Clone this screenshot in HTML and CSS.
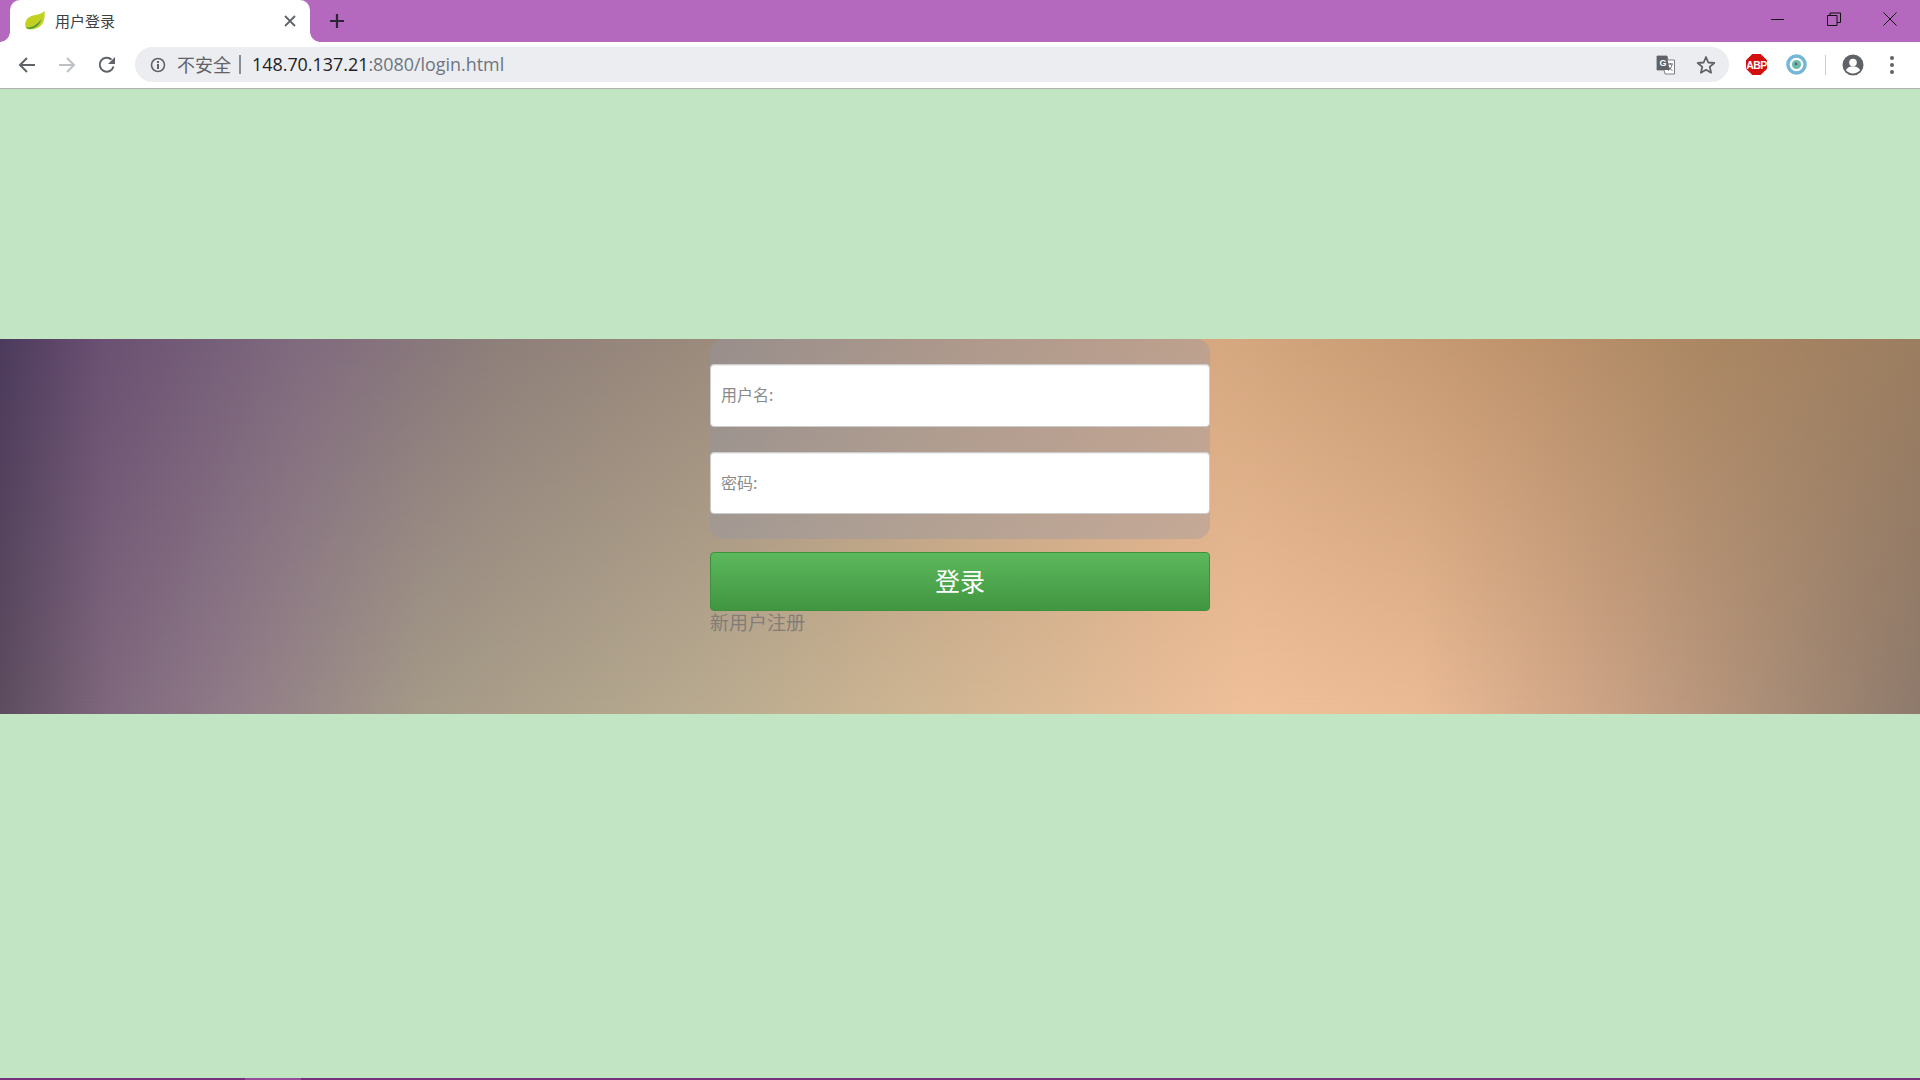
FILE: index.html
```html
<!DOCTYPE html>
<html lang="zh-CN">
<head>
<meta charset="utf-8">
<title>用户登录</title>
<link rel="stylesheet" href="styles.css">
</head>
<body>
<div class="browser">
  <header class="tabstrip">
    <div class="tab">
      <svg class="favicon" viewBox="0 0 20 19"><path d="M.5 16C-1 9 4 5 10 4c4-.6 7-1.500 9.500-4C20.500 8 18 15.500 11 17.500 6 19 2 19 .5 16z" fill="#c2d121"/><path d="M1 16.500c5 .5 11-2 15.500-8.500C15 13.500 11 16.500 7.500 17.500c-3 .8-5.500.5-6.500-1z" fill="#4d9a3a"/></svg>
      <span class="tab-title">用户登录</span>
      <svg class="tab-close" viewBox="0 0 12 12"><path d="M1 1l10 10M11 1L1 11" stroke="#5f6368" stroke-width="1.800" fill="none"/></svg>
    </div>
    <svg class="new-tab" viewBox="0 0 16 16"><path d="M8 1v14M1 8h14" stroke="#2d2438" stroke-width="2.200" fill="none"/></svg>
    <div class="win-controls">
      <svg class="win-btn" viewBox="0 0 14 14"><path d="M0 7.500h13" stroke="#111" stroke-width="1" fill="none"/></svg>
      <svg class="win-btn" viewBox="0 0 14 14"><path d="M.5 3.500h9.500v10H.5zM3 3.500V1h10.500v9.500H10" stroke="#111" stroke-width="1" fill="none"/></svg>
      <svg class="win-btn" viewBox="0 0 14 14"><path d="M.5.5l13 13M13.500.5l-13 13" stroke="#111" stroke-width="1" fill="none"/></svg>
    </div>
  </header>
  <nav class="toolbar">
    <svg class="nav-icon" viewBox="0 0 18 18"><path d="M17 9H2.500M9 2L2 9l7 7" stroke="#5f6368" stroke-width="2" fill="none"/></svg>
    <svg class="nav-icon" viewBox="0 0 18 18"><path d="M1 9h14.500M9 2l7 7-7 7" stroke="#bdc1c6" stroke-width="2" fill="none"/></svg>
    <svg class="nav-icon" viewBox="0 0 18 18"><path d="M15.500 10.500A7 7 0 1 1 13.500 3.500" stroke="#5f6368" stroke-width="2" fill="none"/><path d="M17 1v7h-7z" fill="#5f6368"/></svg>
    <div class="omnibox">
      <svg class="info" viewBox="0 0 16 16"><circle cx="8" cy="8" r="6.500" stroke="#5f6368" stroke-width="1.600" fill="none"/><path d="M7 7h2v5H7zM7 4h2v2H7z" fill="#5f6368"/></svg>
      <span class="insecure">不安全</span>
      <span class="sep"></span>
      <span class="url"><span class="host">148.70.137.21</span>:8080/login.html</span>
      <svg class="omni-icon" viewBox="0 0 20 20"><path d="M1 1h10l1 4h6.500v14H9l-1-4H1z" fill="#fff" stroke="#7a7e83" stroke-width="1"/><path d="M1 1h10l2.500 14H1z" fill="#5f6368"/><text x="3.500" y="11" class="g-mark">G</text><path d="M12 9h5M14.500 8v1.500M16 9.500c-.5 3-2 5-4 6M12.500 11.500c1 2 2.500 3.500 4 4" stroke="#5f6368" stroke-width="1" fill="none"/></svg>
      <svg class="omni-icon" viewBox="0 0 20 20"><path d="M10 2l2.300 5.500 6 .5-4.600 3.900 1.400 5.800L10 14.800l-5.100 2.900 1.400-5.800L1.700 8l6-.5z" stroke="#5f6368" stroke-width="1.800" fill="none" stroke-linejoin="round"/></svg>
    </div>
    <div class="extensions">
      <div class="abp">ABP</div>
      <svg class="ext-eye" viewBox="0 0 22 22"><circle cx="11" cy="11" r="9" fill="#fff" stroke="#74b6d8" stroke-width="3.600"/><circle cx="11" cy="11" r="4.800" fill="#6cbcae"/><circle cx="10.500" cy="10.500" r="1.500" fill="#5a6a70"/></svg>
      <span class="divider"></span>
      <svg class="avatar" viewBox="0 0 22 22"><circle cx="11" cy="11" r="10.500" fill="#5f6368"/><circle cx="11" cy="8.500" r="3.800" fill="#fff"/><path d="M3.800 16c2-3 4.500-3.800 7.200-3.800s5.200.8 7.200 3.800c-1.800 2.200-4.400 3.500-7.200 3.500s-5.400-1.300-7.200-3.500z" fill="#fff"/></svg>
      <svg class="menu" viewBox="0 0 6 20"><circle cx="3" cy="3" r="2" fill="#5f6368"/><circle cx="3" cy="10" r="2" fill="#5f6368"/><circle cx="3" cy="17" r="2" fill="#5f6368"/></svg>
    </div>
  </nav>
  <main class="page">
    <section class="band">
      <div class="login">
        <div class="fields">
          <input class="field" type="text" placeholder="用户名:">
          <input class="field field-short" type="password" placeholder="密码:">
        </div>
        <button class="submit" type="button">登录</button>
        <a class="register" href="#">新用户注册</a>
      </div>
    </section>
  </main>
  <footer class="desktop-edge"><span class="edge-active"></span></footer>
</div>
</body>
</html>
```

FILE: styles.css
```css
* { box-sizing: border-box; }
html, body { margin: 0; height: 100%; overflow: hidden; }
body { font-family: "Noto Sans CJK SC", "Noto Sans", sans-serif; background: #c2e6c4; }
.browser { display: flex; flex-direction: column; height: 1080px; }

.tabstrip { display: flex; align-items: flex-start; height: 42px; flex: none; background: #b469be; padding-left: 10px; }
.tab { position: relative; display: flex; align-items: center; width: 300px; height: 42px; background: #fff; border-radius: 10px 10px 0 0; padding: 0 14px 0 15px; }
.tab::before, .tab::after { content: ""; position: absolute; bottom: 0; width: 10px; height: 10px; }
.tab::before { left: -10px; background: radial-gradient(circle at 0 0, #b469be 9.500px, #fff 10px); }
.tab::after { right: -10px; background: radial-gradient(circle at 100% 0, #b469be 9.500px, #fff 10px); }
.favicon { width: 20px; height: 19px; flex: none; margin-top: -1px; }
.tab-title { flex: 1; margin: 0 0 2px 10px; font-size: 15px; color: #3c4043; }
.tab-close { width: 12px; height: 12px; flex: none; }
.new-tab { width: 16px; height: 16px; margin: 13px 0 0 19px; }
.win-controls { display: flex; margin-left: auto; gap: 42px; padding: 12px 23px 0 0; }
.win-btn { width: 14px; height: 14px; }

.toolbar { display: flex; align-items: center; height: 47px; flex: none; background: #fff; border-bottom: 1px solid #b3b0b4; padding: 0 0 1px 18px; }
.nav-icon { width: 18px; height: 18px; flex: none; margin-right: 22px; }
.nav-icon:nth-of-type(2) { margin-right: 23px; }
.nav-icon:nth-of-type(3) { margin-right: 19px; margin-left: -1px; }
.omnibox { display: flex; align-items: center; width: 1594px; height: 35px; background: #ebedf0; border-radius: 18px; padding: 0 13px 0 15px; }
.info { width: 16px; height: 16px; flex: none; }
.insecure { margin: 0 0 2px 11px; font-size: 18px; color: #5f6368; }
.sep { width: 2px; height: 19px; margin: 0 11px 0 8px; background: #8a8d91; }
.url { flex: 1; margin-bottom: 2px; font-family: "Open Sans", "Noto Sans", sans-serif; font-size: 17.900px; color: #6d7580; }
.host { color: #202124; }
.omni-icon { width: 20px; height: 20px; flex: none; margin-left: 20px; }
.g-mark { font-family: "Liberation Sans", sans-serif; font-size: 9px; font-weight: 700; fill: #fff; }
.extensions { display: flex; align-items: center; margin-left: 17px; }
.abp { display: flex; align-items: center; justify-content: center; width: 21px; height: 21px; background: #d40f0f; color: #fff; font-family: "Liberation Sans", sans-serif; font-size: 10.500px; font-weight: 700; letter-spacing: -.5px; clip-path: polygon(30% 0, 70% 0, 100% 30%, 100% 70%, 70% 100%, 30% 100%, 0 70%, 0 30%); }
.ext-eye { width: 21px; height: 21px; margin-left: 19px; }
.divider { width: 1px; height: 20px; margin: 0 17px 0 18px; background: #c9cbce; }
.avatar { width: 22px; height: 22px; margin-left: -1px; }
.menu { width: 6px; height: 20px; margin-left: 25px; }

.page { flex: 1; padding-top: 250px; }
.band {
  position: relative;
  height: 375px;
  background: linear-gradient(90deg, #5d4c5f 0, #80697e 110px, #8f7a88 220px, #a59a88 420px, #b9ab90 700px, #cdb593 900px, #f0c09a 1250px, #ebbb95 1420px, #c9a184 1620px, #a58a75 1800px, #8e7a6c 1920px);
}
.band::before {
  content: "";
  position: absolute;
  inset: 0;
  background: linear-gradient(90deg, #4c3a5c 0, #6a5072 100px, #7f6a7e 300px, #8e7f7a 500px, #9a8a7c 700px, #bb9a7c 950px, #d6a880 1220px, #c2966f 1480px, #ab8763 1700px, #9b7d60 1920px);
  -webkit-mask-image: linear-gradient(180deg, #000 0, rgba(0,0,0,.55) 45%, transparent 100%);
  mask-image: linear-gradient(180deg, #000 0, rgba(0,0,0,.55) 45%, transparent 100%);
}
.login { position: relative; display: flex; flex-direction: column; width: 500px; margin: 0 auto; }
.fields { display: flex; flex-direction: column; gap: 25px; height: 200px; padding-top: 25px; background: rgba(145,150,170,.35); border-radius: 14px; }
.field { display: block; width: 100%; height: 63px; flex: none; padding: 0 10px 3px; background: #fff; border: 1px solid #ccc; border-radius: 4px; box-shadow: inset 0 1px 1px rgba(0,0,0,.075); font-family: inherit; font-size: 16px; }
.field-short { height: 62px; }
.field::placeholder { color: #8a8a8a; opacity: 1; }
.submit { height: 59px; margin-top: 13px; padding: 0 0 2px; border: 1px solid #3e8f3e; border-radius: 4px; background: linear-gradient(180deg, #5cb85c 0, #419641 100%); color: #fff; font-family: inherit; font-size: 25px; line-height: 1; }
.register { height: 24px; margin-top: -1px; font-size: 19px; line-height: 24px; color: #837d78; text-decoration: none; }

.desktop-edge { display: flex; height: 2px; flex: none; background: #74307a; padding-left: 245px; }
.edge-active { width: 56px; background: #974d9b; }
```
